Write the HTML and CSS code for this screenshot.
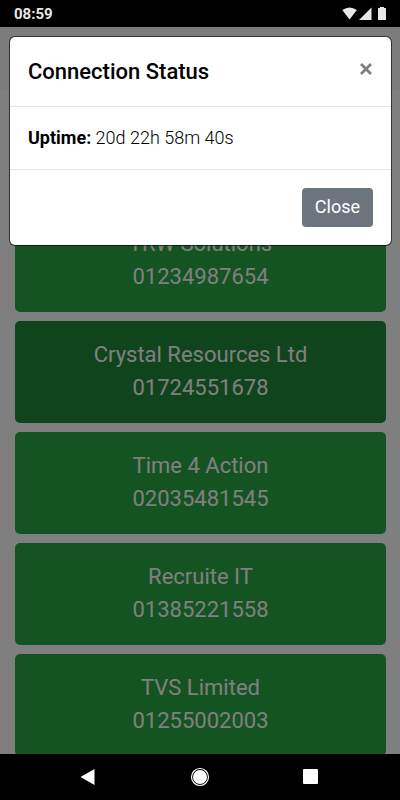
FILE: index.html
```html
<!DOCTYPE html>
<html lang="en">
<head>
  <meta charset="utf-8">
  <meta name="viewport" content="width=device-width, initial-scale=1">
  <title>Connection Status</title>
  <link rel="stylesheet" href="styles.css">
</head>
<body>
  <div class="phone">
    <header class="status-bar">
      <span class="clock">08:59</span>
      <svg class="status-icons" width="44" height="15" viewBox="0 0 44 15" fill="#e8e8e8" aria-hidden="true">
        <path d="M7.500 13.500 0.300 4Q7.500-1.200 14.900 4Z"/>
        <path d="M17 14 29.500 1.500V14Z"/>
        <path d="M36 2.500q0-.5.5-.5H38V1h4v1h1.500q.5 0 .5.500V13.500q0 .5-.5.500h-7q-.5 0-.5-.5Z"/>
      </svg>
    </header>

    <div class="app">
      <div class="page">
        <div class="navbar"></div>
        <main class="contacts">
          <button class="contact" type="button"><span>TRW Solutions</span><span>01234987654</span></button>
          <button class="contact contact-active" type="button"><span>Crystal Resources Ltd</span><span>01724551678</span></button>
          <button class="contact" type="button"><span>Time 4 Action</span><span>02035481545</span></button>
          <button class="contact" type="button"><span>Recruite IT</span><span>01385221558</span></button>
          <button class="contact" type="button"><span>TVS Limited</span><span>01255002003</span></button>
        </main>
      </div>

      <div class="backdrop">
        <section class="modal" role="dialog" aria-labelledby="modal-title">
          <div class="modal-header">
            <h1 class="modal-title" id="modal-title">Connection Status</h1>
            <button class="dismiss" type="button" aria-label="Dismiss">
              <svg width="12" height="12" viewBox="0 0 12 12" fill="none" stroke="#7f7f7f" stroke-width="2.800" aria-hidden="true">
                <path d="M1 1 11 11M11 1 1 11"/>
              </svg>
            </button>
          </div>
          <p class="modal-body"><strong>Uptime:</strong> 20d 22h 58m 40s</p>
          <div class="modal-footer">
            <button class="close" type="button">Close</button>
          </div>
        </section>
      </div>
    </div>

    <nav class="system-nav" aria-label="System">
      <button class="nav-key" type="button" aria-label="Back">
        <svg width="20" height="20" viewBox="0 0 20 20" fill="#fff"><path d="M1.500 10 15.500 2V18Z"/></svg>
      </button>
      <button class="nav-key" type="button" aria-label="Home">
        <svg width="20" height="20" viewBox="0 0 20 20"><circle cx="10" cy="10" r="8.500" fill="none" stroke="#fff" stroke-width="1.200"/><circle cx="10" cy="10" r="7" fill="#fff"/></svg>
      </button>
      <button class="nav-key" type="button" aria-label="Recent apps">
        <svg width="20" height="20" viewBox="0 0 20 20" fill="#fff"><rect x="2" y="2" width="15" height="15" rx="1"/></svg>
      </button>
    </nav>
  </div>
</body>
</html>
```
FILE: styles.css
```css
* {
  box-sizing: border-box;
}

body {
  margin: 0;
  background: #000;
  font-family: Roboto, "Liberation Sans", sans-serif;
  font-size: 18px;
  line-height: 27px;
}

button {
  padding: 0;
  border: 0;
  background: none;
  font: inherit;
}

svg {
  display: block;
}

.phone {
  display: flex;
  flex-direction: column;
  height: 100vh;
}

.status-bar {
  display: flex;
  align-items: center;
  justify-content: space-between;
  height: 27px;
  padding: 0 14px;
  background: #000;
  color: #e8e8e8;
}

.clock {
  font-size: 15px;
  font-weight: 700;
  line-height: 28px;
}

.app {
  position: relative;
  flex: 1;
  min-height: 0;
  overflow: hidden;
  background: #fff;
}

.navbar {
  height: 63px;
  background: #f8f9fa;
}

.contacts {
  display: flex;
  flex-direction: column;
  gap: 9px;
  padding: 120px 14px 9px 15px;
}

.contact {
  display: flex;
  flex-direction: column;
  align-items: center;
  padding: 17px 18px 19px;
  border-radius: 5px;
  background: #28a745;
  color: #fff;
  font-size: 22px;
  line-height: 33px;
}

.contact-active {
  background: #218838;
}

.backdrop {
  position: absolute;
  inset: 0;
  padding: 9px 8px 9px 9px;
  background: rgba(0, 0, 0, 0.5);
}

.modal {
  border: 1px solid rgba(0, 0, 0, 0.6);
  border-radius: 6px;
  background: #fff;
  background-clip: padding-box;
  color: #000;
}

.modal-header {
  display: flex;
  align-items: center;
  justify-content: space-between;
  padding: 18px;
  border-bottom: 1px solid #e5e7ea;
}

.modal-title {
  margin: 0;
  font-size: 22px;
  font-weight: 500;
  line-height: 33px;
}

.dismiss {
  align-self: flex-start;
  padding: 8px 1px;
}

.modal-body {
  margin: 0;
  padding: 17px 18px 18px;
  font-weight: 300;
}

.modal-body strong {
  font-weight: 700;
}

.modal-footer {
  display: flex;
  justify-content: flex-end;
  padding: 18px;
  border-top: 1px solid #e5e7ea;
}

.close {
  padding: 5px 13px 7px;
  border-radius: 4px;
  background: #6c757d;
  color: #fff;
}

.system-nav {
  display: flex;
  align-items: center;
  justify-content: center;
  gap: 91px;
  height: 46px;
  background: #000;
}
```
